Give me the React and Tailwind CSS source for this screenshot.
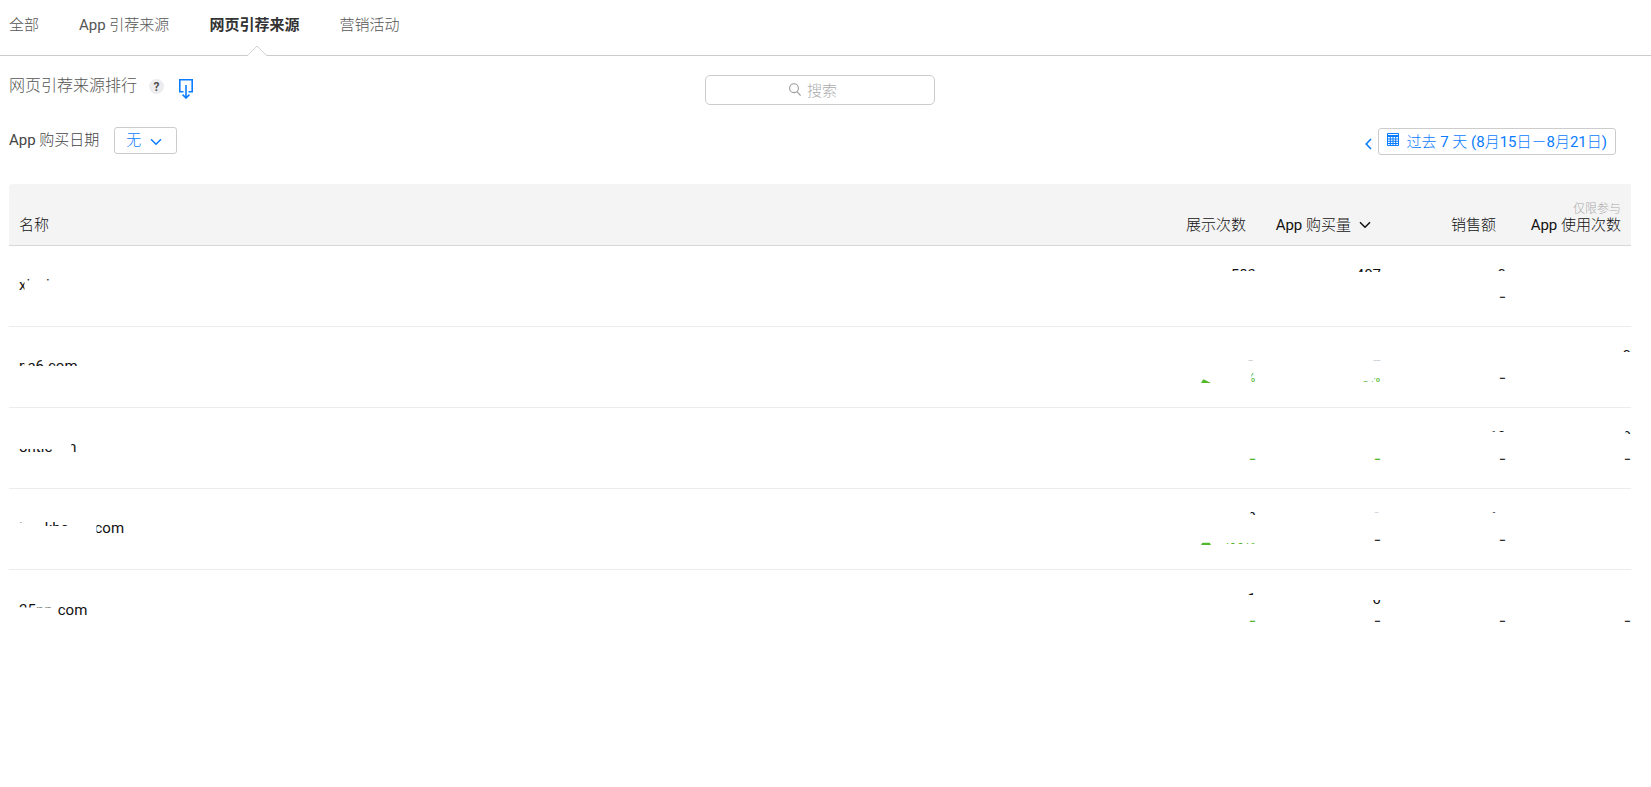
import React from 'react';

const TABS = [
  { label: '全部' },
  { label: 'App 引荐来源' },
  { label: '网页引荐来源', active: true },
  { label: '营销活动' },
];

/* Names and numbers are partly masked: each piece carries its own clip. */
const ROWS = [
  {
    name: [
      { t: 'x', c: '[clip-path:inset(0_2px_0_0)]' },
      { t: 'i', c: '[clip-path:inset(0_0_14px_0)]' },
      { t: 'i', c: 'ml-4 [clip-path:inset(0_0_14px_0)]' },
    ],
    cells: [
      { top: [{ t: '583', c: '[clip-path:inset(0_0_14px_0)]' }] },
      { top: [{ t: '407', c: '[clip-path:inset(0_0_13px_0)]' }] },
      { top: [{ t: '0', c: '[clip-path:inset(0_0_14px_0)]' }], sub: '-' },
      {},
    ],
  },
  {
    name: [
      { t: 'p', c: '[clip-path:inset(0_3px_10px_0)]' },
      { t: 'a6.com', c: '[clip-path:inset(0_0_10px_0)]' },
    ],
    cells: [
      {
        top: [{ t: '2', c: 'text-gray-300 [clip-path:inset(14px_3px_4px_0)]' }],
        change: { up: '[clip-path:polygon(0_60%,30%_60%,100%_100%,0_100%)]', t: '%', c: '[clip-path:inset(3px_0_0_7px)]' },
        green: true,
      },
      {
        top: [{ t: '2', c: 'text-gray-300 [clip-path:inset(14px_0_4px_0)]' }],
        change: { t: '5%', c: '[clip-path:polygon(0_70%,65%_70%,65%_50%,100%_50%,100%_100%,0_100%)]' },
        green: true,
      },
      { sub: '-' },
      { top: [{ t: '0', c: '[clip-path:inset(0_0_14px_0)]' }] },
    ],
  },
  {
    name: [
      { t: 'ontic', c: '[clip-path:inset(12px_0_0_0)]' },
      { t: 'm', c: 'ml-[11px] [clip-path:inset(0_0_0_8px)]' },
    ],
    cells: [
      { sub: '-', green: true },
      { sub: '-', green: true },
      { top: [{ t: '10', c: '[clip-path:inset(0_0_15px_0)]' }], sub: '-' },
      { top: [{ t: '0', c: '[clip-path:inset(0_0_13px_3px)]' }], sub: '-' },
    ],
  },
  {
    name: [
      { t: 'l', c: 'text-gray-400 [clip-path:inset(0_0_15px_0)]' },
      { t: 'khe', c: 'ml-[22px] [clip-path:inset(0_0_12px_0)]' },
      { t: 'com', c: 'ml-[26px] [clip-path:inset(0_0_0_2px)]' },
    ],
    cells: [
      {
        top: [{ t: '2', c: '[clip-path:inset(0_0_13px_3px)]' }],
        change: { up: '[clip-path:inset(75%_0_0_0)]', t: '100%', c: '[clip-path:inset(11px_0_0_0)]' },
        green: true,
      },
      { top: [{ t: '0', c: 'text-gray-300 [clip-path:inset(0_0_15px_0)]' }], sub: '-' },
      { top: [{ t: '1', c: 'mr-2 [clip-path:inset(0_0_15px_0)]' }], sub: '-' },
      {},
    ],
  },
  {
    name: [
      { t: '25pp', c: '[clip-path:inset(0_0_12px_0)]' },
      { t: 'com', c: 'ml-[5px]' },
    ],
    cells: [
      { top: [{ t: '1', c: '[clip-path:inset(0_0_14px_0)]' }], sub: '-', green: true },
      { top: [{ t: '0', c: '[clip-path:inset(11px_0_0_0)]' }], sub: '-' },
      { sub: '-' },
      { sub: '-' },
    ],
  },
];

function Chevron({ className }) {
  return (
    <svg viewBox="0 0 12 8" fill="none" stroke="currentColor" strokeWidth="1.5" className={className} aria-hidden="true">
      <path d="M1 1.2 6 6.2 11 1.2" />
    </svg>
  );
}

function Pieces({ items }) {
  return items.map((p, i) => (
    <span key={i} className={`inline-block ${p.c}`}>
      {p.t}
    </span>
  ));
}

function ValueCell({ cell, last }) {
  return (
    <td className={`p-0 pt-[19px] align-top text-right ${last ? '' : 'border-b border-[#ececec]'}`}>
      <div className="flex h-5 justify-end leading-5">{cell.top && <Pieces items={cell.top} />}</div>
      <div
        className={`mt-1 flex h-4 items-start justify-end font-[Inter,sans-serif] ${
          cell.green ? 'text-[#53b82c]' : 'text-[#333]'
        }`}
      >
        {cell.sub && <span className="text-base leading-[14px]">{cell.sub}</span>}
        {cell.change && (
          <>
            {cell.change.up && (
              <svg viewBox="0 0 10 9" fill="currentColor" className={`mt-1 h-[9px] w-[10px] ${cell.change.up}`} aria-hidden="true">
                <path d="M5 0 10 9H0Z" />
              </svg>
            )}
            <span className={`text-xs leading-4 ${cell.change.up ? 'flex w-[45px] justify-end' : ''}`}>
              <span className={`inline-block ${cell.change.c}`}>{cell.change.t}</span>
            </span>
          </>
        )}
      </div>
    </td>
  );
}

function Tabs() {
  return (
    <nav className="flex h-14 gap-10 border-b border-[#ccc] pl-[9px] leading-5">
      {TABS.map((tab) => (
        <a
          key={tab.label}
          href="#"
          aria-current={tab.active ? 'page' : undefined}
          className={`relative pt-[15px] ${
            tab.active ? "font-[Roboto,'Noto_Sans_CJK_SC',sans-serif] font-bold text-[#333]" : 'text-[#555]'
          }`}
        >
          {tab.label}
          {tab.active && (
            <svg viewBox="0 0 20 11" className="absolute -bottom-px left-[53%] h-[11px] w-5 -translate-x-1/2" aria-hidden="true">
              <path d="M0 11 1 10 10 1 19 10 20 11Z" fill="#fff" />
              <path d="M0 10.5 1 10 10 1 19 10 20 10.5" fill="none" stroke="#d4d4d4" />
            </svg>
          )}
        </a>
      ))}
    </nav>
  );
}

export default function App() {
  return (
    <div className="min-h-screen bg-white font-[Roboto,'Noto_Sans_CJK_SC_Light','Noto_Sans_CJK_SC',sans-serif] text-[15px] text-[#111]">
      <Tabs />
      <main className="pr-5 pl-[9px]">
        <div className="grid grid-cols-[1fr_230px_1fr] items-start pt-[19px]">
          <div className="flex items-start">
            <h1 className="text-base leading-[22px] text-[#555]">网页引荐来源排行</h1>
            <button
              type="button"
              aria-label="帮助"
              className="mt-1 ml-3 flex size-[15px] items-center justify-center rounded-full bg-[#ededf0] text-xs leading-none font-bold text-[#555]"
            >
              ?
            </button>
            <button type="button" aria-label="下载" className="mt-1 ml-[15px] text-[#0a7cff]">
              <svg viewBox="0 0 14 20" fill="none" stroke="currentColor" strokeWidth="1.6" className="block h-5 w-[14px]" aria-hidden="true">
                <path d="M4.5 12.7H.8V.8h12.4v11.9H9.5M7 6v12.5M3.6 15.6 7 19l3.4-3.4" />
              </svg>
            </button>
          </div>
          <label className="flex h-[30px] items-center justify-center gap-[6px] rounded-[5px] border border-[#ccc] pr-[14px] pb-0.5">
            <svg viewBox="0 0 12 13" fill="none" stroke="#999" strokeWidth="1.1" className="h-[13px] w-3" aria-hidden="true">
              <circle cx="5" cy="5.2" r="4.4" />
              <path d="M8 8.6 11.6 12.6" />
            </svg>
            <input
              type="text"
              aria-label="搜索"
              placeholder="搜索"
              className="field-sizing-content bg-transparent leading-5 outline-none placeholder:text-[#aaa]"
            />
          </label>
        </div>

        <div className="mt-[22px] flex items-start justify-between pr-[15px]">
          <div className="flex h-[27px] items-center">
            <label htmlFor="purchase-date" className="text-[#444]">
              App 购买日期
            </label>
            <div className="relative ml-[15px]">
              <select
                id="purchase-date"
                className="block h-[27px] w-[63px] appearance-none rounded-[3px] border border-[#ccc] bg-white pl-[11px] text-[#0a7cff]"
              >
                <option>无</option>
              </select>
              <Chevron className="pointer-events-none absolute top-[11px] right-[15px] h-2 w-3 text-[#0a7cff]" />
            </div>
          </div>
          <div className="flex items-center pt-px text-[#0a7cff]">
            <button type="button" aria-label="上一时段" className="mt-1 mr-[6px]">
              <svg viewBox="0 0 7 12" fill="none" stroke="currentColor" strokeWidth="1.6" className="block h-3 w-[7px]" aria-hidden="true">
                <path d="M6 1 1.2 6 6 11" />
              </svg>
            </button>
            <button type="button" className="flex h-[27px] items-center gap-[7px] rounded-[3px] border border-[#ccc] px-2">
              <svg viewBox="0 0 12 13" className="-mt-1 h-[13px] w-3" aria-hidden="true">
                <path
                  d="M.5.5h11v12H.5zM.5 3.5h11M.5 6h11M.5 8.3h11M.5 10.5h11M3.3 3.5v9M6 3.5v9M8.7 3.5v9"
                  fill="none"
                  stroke="currentColor"
                />
                <path d="M0 2h12v1.5H0z" fill="currentColor" />
              </svg>
              <span className="pt-0.5">过去 7 天 (8月15日－8月21日)</span>
            </button>
          </div>
        </div>

        <table className="mt-[29px] w-full table-fixed border-separate border-spacing-0">
          <colgroup>
            <col />
            <col className="w-[125px]" />
            <col className="w-[125px]" />
            <col className="w-[125px]" />
            <col className="w-[125px]" />
          </colgroup>
          <thead>
            <tr className="h-[62px] text-right leading-4 [&>th]:border-b [&>th]:border-[#d8d8d8] [&>th]:bg-[#f4f4f4] [&>th]:px-[10px] [&>th]:pb-3 [&>th]:align-bottom [&>th]:font-normal [&>th]:whitespace-nowrap">
              <th className="rounded-tl text-left">名称</th>
              <th>展示次数</th>
              <th aria-sort="descending">
                <button type="button" className="inline-flex items-center gap-2 leading-4">
                  App 购买量
                  <Chevron className="h-2 w-3" />
                </button>
              </th>
              <th>销售额</th>
              <th>
                <span className="block text-xs leading-4 text-[#aaa]">仅限参与</span>
                App 使用次数
              </th>
            </tr>
          </thead>
          <tbody>
            {ROWS.map((row, i) => {
              const last = i === ROWS.length - 1;
              return (
                <tr key={i} className="h-[81px]">
                  <td className={`p-0 pb-0.5 pl-[10px] leading-5 ${last ? '' : 'border-b border-[#ececec]'}`}>
                    <div className="flex">
                      <Pieces items={row.name} />
                    </div>
                  </td>
                  {row.cells.map((cell, j) => (
                    <ValueCell key={j} cell={cell} last={last} />
                  ))}
                </tr>
              );
            })}
          </tbody>
        </table>
      </main>
    </div>
  );
}
